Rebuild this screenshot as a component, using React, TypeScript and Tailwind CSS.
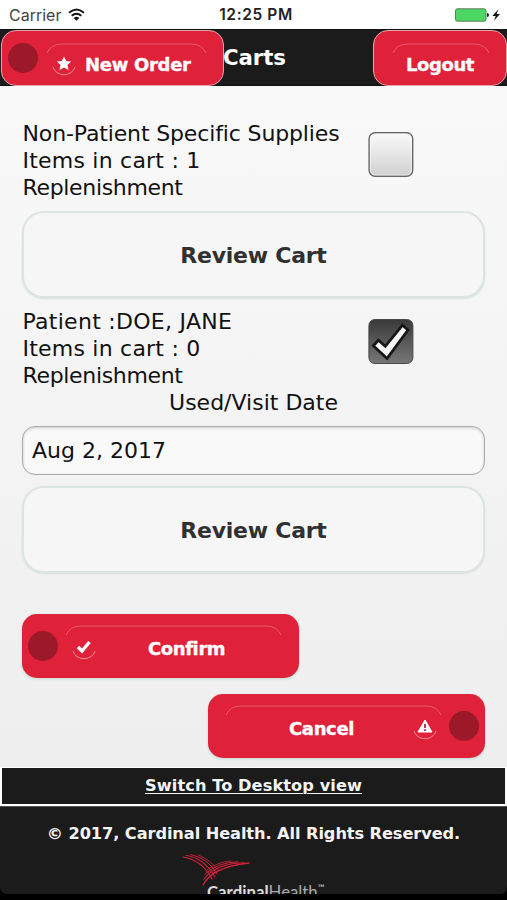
import type { ReactNode } from "react";

const redButton =
  "relative flex items-center bg-[#e0213a] font-['DejaVu_Sans',sans-serif] font-bold text-white [-webkit-text-stroke:0.35px_white]";

function Arc({ width }: { width: number }) {
  return (
    <svg width={width} height="12" viewBox={`0 0 ${width} 12`} fill="none" className="block">
      <path
        d={`M1 10 Q5 1 16 1 H${width - 16} Q${width - 5} 1 ${width - 1} 10`}
        stroke="#f27c8a"
        strokeWidth="0.9"
        strokeOpacity="0.7"
      />
    </svg>
  );
}

function IconDisc({ children }: { children: ReactNode }) {
  return (
    <svg width="26" height="26" viewBox="0 0 26 26" fill="none" className="block shrink-0">
      <path d="M2 15 A11.3 10 0 0 0 24 15" stroke="#f4909c" strokeWidth="1" />
      {children}
    </svg>
  );
}

function Dot() {
  return <span className="block size-[30px] shrink-0 rounded-full bg-[#9c1929]" />;
}

function StatusBar() {
  return (
    <div className="grid h-[29px] grid-cols-3 items-center bg-white px-[9px] font-['Inter',sans-serif] text-[16px] leading-none text-[#222]">
      <div className="flex items-center gap-[7px]">
        <span className="text-[16px] tracking-[0px] text-[#444]">Carrier</span>
        <svg width="17" height="13" viewBox="0 0 17 13" fill="none" stroke="#161616">
          <path d="M1 4.8 Q8.5 -1.7 16 4.8" strokeWidth="2" />
          <path d="M3.7 7.8 Q8.5 3.7 13.3 7.8" strokeWidth="2" />
          <path d="M5.7 10 Q8.5 7.6 11.3 10 L8.5 12.7Z" fill="#161616" stroke="none" />
        </svg>
      </div>
      <span className="whitespace-nowrap pl-[5px] pt-px text-center text-[15.5px] font-semibold tracking-[0.6px]">
        12:25 PM
      </span>
      <div className="-mr-[3px] flex items-center justify-end">
        <svg width="46" height="14" viewBox="0 0 46 14">
          <rect x="0.5" y="0.8" width="30.5" height="12.4" rx="1.8" fill="#4cd662" stroke="#5f7c62" />
          <path d="M32 5 Q34 5 34 7 Q34 9 32 9Z" fill="#222" />
          <path d="M43.5 1.2 L37.3 7.9 H40.7 L39 12.7 L45 6 H41.6Z" fill="#111" />
        </svg>
      </div>
    </div>
  );
}

function Header() {
  return (
    <header className="flex h-[57px] items-start justify-between border-y border-[#111] bg-[#1b1b1b] pl-px">
      <div className="flex items-center">
        <button className={`${redButton} h-[56px] w-[223px] rounded-[15px] border border-[#e5a6ad] pl-[6px]`}>
          <Dot />
          <span className="ml-[13px] flex items-center pt-[13px]">
            <IconDisc>
              <path
                d="M13 4.5 L15.2 9 L20.2 9.6 L16.5 13 L17.5 18 L13 15.5 L8.5 18 L9.5 13 L5.8 9.6 L10.8 9Z"
                fill="#fff"
              />
            </IconDisc>
            <span className="ml-[8px] whitespace-nowrap text-[18px] tracking-[-0.3px]">New Order</span>
          </span>
          <span className="absolute left-[44px] top-[12px]">
            <Arc width={161} />
          </span>
        </button>
        <h1 className="-ml-px font-['DejaVu_Sans',sans-serif] text-[21.3px] font-bold leading-none tracking-[-0.1px] text-white">
          Carts
        </h1>
      </div>
      <button className={`${redButton} h-[56px] w-[134px] justify-center rounded-[15px] border border-[#e5a6ad]`}>
        <span className="whitespace-nowrap pt-[13px] text-[18px] tracking-[-0.4px]">Logout</span>
        <span className="absolute left-[18px] top-[12px]">
          <Arc width={98} />
        </span>
      </button>
    </header>
  );
}

interface Line {
  text: string;
  tracking: string;
}

function CartInfo({ lines, checked }: { lines: Line[]; checked?: boolean }) {
  return (
    <div className="flex items-start justify-between pr-[71px]">
      <div className="whitespace-nowrap pl-[0.5px]">
        {lines.map((line) => (
          <p key={line.text} className={line.tracking}>
            {line.text}
          </p>
        ))}
      </div>
      {checked ? (
        <svg width="47" height="47" viewBox="0 0 47 47" className="mt-[10px]">
          <defs>
            <linearGradient id="checked" x2="0" y2="1">
              <stop stopColor="#393939" />
              <stop offset="1" stopColor="#777" />
            </linearGradient>
          </defs>
          <rect x="1.9" y="1.5" width="44" height="44" rx="6" fill="url(#checked)" stroke="#484848" />
          <path
            d="M6.3 27.8 L11.5 22.3 L18.3 28.3 L35.5 7.2 L41 12 L20 40.5Z"
            fill="#f5f5f5"
            stroke="#161616"
            strokeWidth="2.8"
          />
        </svg>
      ) : (
        <svg width="47" height="47" viewBox="0 0 47 47" className="mt-[11px]">
          <defs>
            <linearGradient id="unchecked" x2="0" y2="1">
              <stop stopColor="#fafafa" />
              <stop offset="1" stopColor="#d0d0d0" />
            </linearGradient>
          </defs>
          <rect x="2.1" y="1.7" width="43.6" height="43.6" rx="6" fill="url(#unchecked)" stroke="#666" strokeWidth="1.4" />
          <rect x="3.4" y="3" width="41" height="41" rx="5" fill="none" stroke="#fff" strokeOpacity="0.55" />
        </svg>
      )}
    </div>
  );
}

function ReviewButton() {
  return (
    <button className="block h-[87px] w-full rounded-[22px] border-2 border-[#dbe4e2] bg-[#f6f6f6] pt-[2px] text-[22px] font-bold tracking-[-0.25px] text-[#303030] shadow-[0_1px_2px_#cfe0dc]">
      Review Cart
    </button>
  );
}

function BirdLogo() {
  return (
    <svg width="70" height="34" viewBox="0 0 70 34" fill="none" stroke="#d3203a" strokeLinecap="round">
      <path d="M2 4 Q21 7 31 26" strokeWidth="1.2" />
      <path d="M5 2.3 Q23 5 34 24" strokeWidth="1.1" />
      <path d="M10 1.6 Q27 5 36 21" strokeWidth="1" />
      <path d="M17 1.8 Q30 7 37.5 18" strokeWidth="0.8" />
      <path d="M22 32 Q31 14 68 10" strokeWidth="1.3" />
      <path d="M23 26 Q34 10.5 63 9.7" strokeWidth="1.1" />
      <path d="M24 21 Q37 9 57 8.8" strokeWidth="1" />
      <path d="M26 17 Q37 8.5 50 8" strokeWidth="0.8" />
    </svg>
  );
}

function Footer() {
  return (
    <footer className="h-[133px] overflow-hidden bg-black font-['DejaVu_Sans',sans-serif] text-[16.2px] font-bold text-[#f4f4f4]">
      <div className="flex h-[39px] items-center justify-center border-x-2 border-b-2 border-t border-white bg-[#1b1b1b] pt-px">
        <a className="whitespace-nowrap tracking-[0.08px] underline decoration-1 underline-offset-2">
          Switch To Desktop view
        </a>
      </div>
      <div className="h-[88px] overflow-hidden rounded-b-[7px] border-t border-[#555] bg-[#1b1b1b]">
        <p className="whitespace-nowrap pt-[17px] text-center leading-[20px] tracking-[-0.08px]">
          © 2017, Cardinal Health. All Rights Reserved.
        </p>
        <div className="pl-[181px] pt-[9px]">
          <BirdLogo />
          <div className="-mt-[5px] flex items-start pl-[26px] font-['Lato',sans-serif] text-[16.8px] leading-[20px] text-[#ddd]">
            <span>Cardinal</span>
            <span className="font-normal text-[#aaa]">Health</span>
            <span className="text-[9px] font-normal leading-[12px]">™</span>
          </div>
        </div>
      </div>
    </footer>
  );
}

const supplies: Line[] = [
  { text: "Non-Patient Specific Supplies", tracking: "tracking-[-0.14px]" },
  { text: "Items in cart : 1", tracking: "tracking-[0.22px]" },
  { text: "Replenishment", tracking: "tracking-[-0.33px]" },
];

const patient: Line[] = [
  { text: "Patient :DOE, JANE", tracking: "tracking-[0.28px]" },
  { text: "Items in cart : 0", tracking: "tracking-[0.22px]" },
  { text: "Replenishment", tracking: "tracking-[-0.33px]" },
];

export default function App() {
  return (
    <div className="flex h-[900px] w-[507px] flex-col overflow-hidden">
      <StatusBar />
      <Header />
      <main className="h-[681px] bg-linear-to-b from-[#f9f9f9] to-[#eeeeee] px-[22px] pt-[34px] font-['DejaVu_Sans',sans-serif] text-[22px] leading-[27px] text-[#111]">
        <CartInfo lines={supplies} />
        <div className="mt-[10px]">
          <ReviewButton />
        </div>
        <div className="mt-[10px]">
          <CartInfo lines={patient} checked />
        </div>
        <p className="text-center">Used/Visit Date</p>
        <div className="mt-[10px] flex h-[49px] items-center rounded-[13px] border border-[#aaa] bg-[#f9f9f9] px-[9px] shadow-[inset_0_1px_3px_#ccc]">
          Aug 2, 2017
        </div>
        <div className="mt-[11px]">
          <ReviewButton />
        </div>
        <button className={`${redButton} mt-[41px] h-[64px] w-[277px] rounded-[15px] pl-[6px] text-[18px] shadow-[0_1px_3px_#bdd8d3]`}>
          <Dot />
          <span className="ml-[13px] pt-[5px]">
            <IconDisc>
              <path d="M7 11 L11 15 L18.5 6" stroke="#fff" strokeWidth="3.3" />
            </IconDisc>
          </span>
          <span className="ml-[51px] pt-[4px] tracking-[-0.4px]">Confirm</span>
          <span className="absolute left-[43px] top-[11px]">
            <Arc width={217} />
          </span>
        </button>
        <button className={`${redButton} ml-auto mt-[16px] h-[64px] w-[277px] rounded-[15px] pr-[6px] text-[18px] shadow-[0_1px_3px_#bdd8d3]`}>
          <span className="ml-[81px] mr-auto pt-[4px] tracking-[-0.35px]">Cancel</span>
          <span className="mr-[11px] pt-[5px]">
            <IconDisc>
              <path d="M13 4 L20 16 H6Z" fill="#fff" stroke="#fff" strokeLinejoin="round" />
              <path d="M13 8 V12 M13 13.2 V15" stroke="#a51b2d" strokeWidth="1.7" />
            </IconDisc>
          </span>
          <Dot />
          <span className="absolute left-[17px] top-[11px]">
            <Arc width={217} />
          </span>
        </button>
      </main>
      <Footer />
    </div>
  );
}
